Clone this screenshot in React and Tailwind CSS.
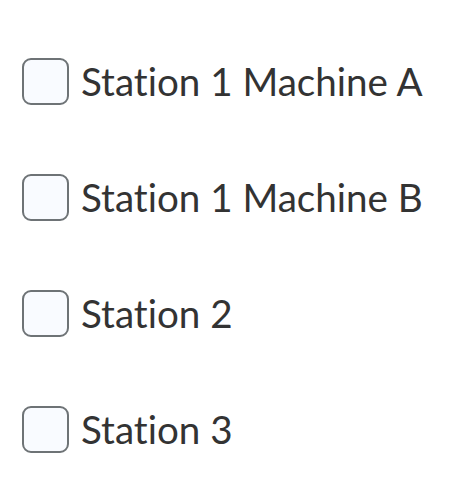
export default function App() {
  const items = ["Station 1 Machine A", "Station 1 Machine B", "Station 2", "Station 3"];
  return (
    <div className="w-[458px] h-[478px] bg-white pt-[58px] pl-[22px] flex flex-col gap-[69px]" style={{ fontFamily: "Lato, sans-serif" }}>
      {items.map((t) => (
        <label key={t} className="flex items-center gap-[12px] h-[47px]">
          <span className="w-[47px] h-[47px] shrink-0 rounded-[9px] border-2 border-[#6e7376] bg-[#f9fbff]" />
          <span className="text-[38.6px] leading-none text-[#333333] [font-variant-ligatures:none]">{t}</span>
        </label>
      ))}
    </div>
  );
}
